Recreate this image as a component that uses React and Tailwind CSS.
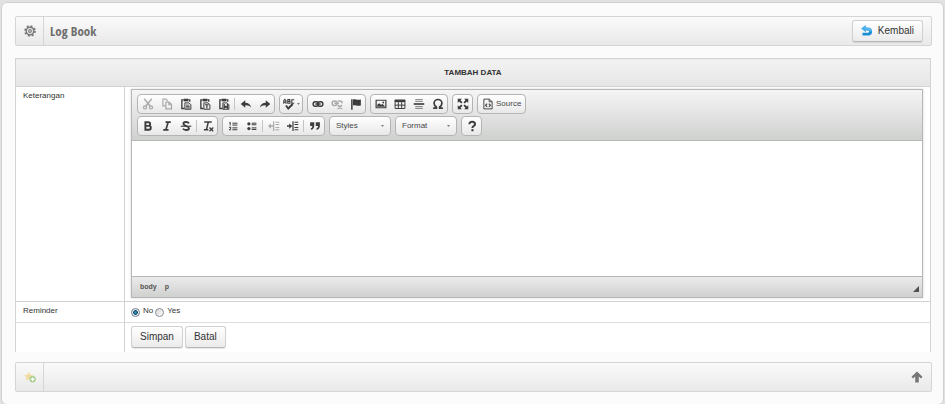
import { useState } from "react";

const Group = ({ children }) => (
    <div className="flex h-5 items-center rounded-sm border border-[#b4b4b4] bg-linear-to-b from-white to-[#e8e8e8]">
        {children}
    </div>
);

const Tool = ({ label, disabled, wide, children }) => (
    <button
        type="button"
        aria-label={label}
        disabled={disabled}
        className={`flex h-[18px] items-center justify-center text-[#3c3c3c] disabled:opacity-40 ${wide ? "w-[22px]" : "w-[19px]"}`}
    >
        {children}
    </button>
);

const Separator = () => <span className="mx-px h-3 w-px bg-[#c4c4c4]" />;

const Icon = ({ children, className = "size-3" }) => (
    <svg
        viewBox="0 0 16 16"
        className={className}
        fill="none"
        stroke="currentColor"
        strokeWidth="1.6"
        aria-hidden="true"
    >
        {children}
    </svg>
);

const Clipboard = ({ children }) => (
    <Icon>
        <path d="M5 2.5H2.5V14H6M11 2.5H13V5" strokeWidth="1.8" />
        <path d="M5 1h6v3.5H5z" fill="currentColor" stroke="none" />
        <path d="M6.5 6.5h5.5l2.5 2.5v6h-8z" strokeWidth="1.3" />
        {children}
    </Icon>
);

const Combo = ({ label }) => (
    <div className="relative h-5 rounded-sm border border-[#b4b4b4] bg-linear-to-b from-white to-[#e8e8e8]">
        <select
            aria-label={label}
            className="block h-[18px] w-[60px] appearance-none bg-transparent pl-1.5 text-[8px] text-[#474747] outline-none"
        >
            <option>{label}</option>
        </select>
        <svg viewBox="0 0 4 2" className="pointer-events-none absolute top-2 right-1.5 h-0.5 w-[3px]" aria-hidden="true">
            <path d="M0 0h4L2 2z" fill="#555" />
        </svg>
    </div>
);

const Toolbar = () => (
    <div className="space-y-0.5 border-b border-[#b6b6b6] bg-linear-to-b from-[#f5f5f5] to-[#cfd1cf] px-[5px] py-1">
        <div className="flex gap-1">
            <Group>
                <Tool label="Cut" disabled>
                    <Icon>
                        <path d="M3 1l8 10M13 1L5 11" strokeWidth="2" />
                        <circle cx="4" cy="12.5" r="2" />
                        <circle cx="12" cy="12.5" r="2" />
                    </Icon>
                </Tool>
                <Tool label="Copy" disabled>
                    <Icon>
                        <path d="M6 10.5H2.5V1.5H6.5L9 4" />
                        <path d="M6.5 5.5H11L14 8.5V14.5H6.5zM10.5 5.5V9H14" />
                    </Icon>
                </Tool>
                <Tool label="Paste">
                    <Clipboard>
                        <path d="M8 9.5h4.5M8 11.5h5M8 13.3h5" strokeWidth="1.2" />
                    </Clipboard>
                </Tool>
                <Tool label="Paste as plain text">
                    <Clipboard>
                        <path d="M8 9h5M10.5 9v5" />
                    </Clipboard>
                </Tool>
                <Tool label="Paste from Word">
                    <Clipboard>
                        <path d="M8.3 8v5.5l2.2-2.5 2.2 2.5V8" />
                    </Clipboard>
                </Tool>
                <Separator />
                <Tool label="Undo">
                    <Icon>
                        <path d="M1 8l6-5v3.2c4 0 7 2 8 6.8-2-2.5-4.5-3.3-8-3.2V13z" fill="currentColor" stroke="none" />
                    </Icon>
                </Tool>
                <Tool label="Redo">
                    <Icon>
                        <path d="M15 8L9 3v3.2c-4 0-7 2-8 6.8 2-2.5 4.5-3.3 8-3.2V13z" fill="currentColor" stroke="none" />
                    </Icon>
                </Tool>
            </Group>
            <Group>
                <Tool label="Spell check" wide>
                    <Icon>
                        <path d="M1 7.5V3.5L2.500 1.800 4 3.500V7.500M1 5.500h3M6.300 1.500v5.500h3V4.500h-3M6.300 2H9v2.500M15 2.300h-3.300V7H15" strokeWidth="1.4" />
                        <path d="M4 10l3 4 6-6" strokeWidth="2.6" />
                    </Icon>
                    <svg viewBox="0 0 4 2" className="ml-0.5 h-0.5 w-[3px]" aria-hidden="true">
                        <path d="M0 0h4L2 2z" fill="#555" />
                    </svg>
                </Tool>
            </Group>
            <Group>
                <Tool label="Link">
                    <Icon>
                        <rect x="1.5" y="5" width="7" height="6" rx="3" strokeWidth="2" />
                        <rect x="7.5" y="5" width="7" height="6" rx="3" strokeWidth="2" />
                        <path d="M4.5 8h7" strokeWidth="2" />
                    </Icon>
                </Tool>
                <Tool label="Unlink" disabled>
                    <Icon>
                        <rect x="1.5" y="4" width="6.5" height="6" rx="3" strokeWidth="2" />
                        <path d="M4.5 7h6M9 4h3a3 3 0 013 3M9 9.5l5.500 5M14.500 9.500l-5.500 5" strokeWidth="2" />
                    </Icon>
                </Tool>
                <Tool label="Anchor">
                    <Icon>
                        <path d="M2.5 1.5v14" strokeWidth="2" />
                        <path d="M4 2c3-1.500 4 1.500 10.500 0v8c-6 1.500-7.500-1.500-10.500 0z" fill="currentColor" stroke="none" />
                    </Icon>
                </Tool>
            </Group>
            <Group>
                <Tool label="Image">
                    <Icon>
                        <path d="M1.5 3h13v10h-13z" />
                        <path d="M3 11.5V9l2.500-2 2.500 2 2-1 3 2.500v1z" fill="currentColor" stroke="none" />
                        <circle cx="11" cy="6" r="1.2" fill="currentColor" stroke="none" />
                    </Icon>
                </Tool>
                <Tool label="Table">
                    <Icon>
                        <path d="M1 2h14v3.5H1z" fill="currentColor" stroke="none" />
                        <path d="M1.5 3v11h13V3M1 9.500h14M5.800 5v9M10.200 5v9" strokeWidth="1.3" />
                    </Icon>
                </Tool>
                <Tool label="Horizontal line">
                    <Icon>
                        <path d="M3 2h10M3 4.5h10M3 11.5h10M3 14h10" opacity="0.55" />
                        <path d="M1 8h14" strokeWidth="2.2" />
                    </Icon>
                </Tool>
                <Tool label="Special character">
                    <Icon>
                        <path d="M1.5 13.5h4.300v-1.500C3.500 10.500 2.800 9 2.800 7a5.200 5 0 0110.400 0c0 2-.7 3.500-3 5v1.500h4.300" strokeWidth="2.3" />
                    </Icon>
                </Tool>
            </Group>
            <Group>
                <Tool label="Maximize">
                    <Icon>
                        <path d="M1 1h5.5L1 6.500zM15 1v5.500L9.500 1zM1 15V9.500L6.500 15zM15 15H9.500L15 9.500z" fill="currentColor" stroke="none" />
                        <path d="M2 2l4.500 4.500M14 2L9.500 6.500M2 14l4.500-4.500M14 14L9.500 9.500" strokeWidth="2.4" />
                    </Icon>
                </Tool>
            </Group>
            <Group>
                <button type="button" className="flex h-[18px] items-center gap-0.5 px-1 text-[8px] text-[#474747]">
                    <Icon>
                        <path d="M2.5 1.5H10L13.5 5v9.500h-11zM9.500 1.500V5h4" strokeWidth="1.3" />
                        <path d="M6.8 7.5L4.800 9.700l2 2.200M9.200 7.500l2 2.200-2 2.200" />
                    </Icon>
                    Source
                </button>
            </Group>
        </div>
        <div className="flex gap-1">
            <Group>
                <Tool label="Bold">
                    <Icon>
                        <path d="M4.5 3h4a2.400 2.400 0 010 4.800h-4zM4.500 7.800h4.700a2.600 2.600 0 010 5.200H4.500z" strokeWidth="2.5" />
                    </Icon>
                </Tool>
                <Tool label="Italic">
                    <Icon>
                        <path d="M6 2.8h7M3 13.200h7M9.500 3l-3 10" strokeWidth="2.2" />
                    </Icon>
                </Tool>
                <Tool label="Strikethrough">
                    <Icon>
                        <path d="M12 4.5C10.500 2 4.500 2 4.500 5s7.500 3 7.500 6-6.500 3-8 .5" strokeWidth="2.4" />
                        <path d="M1 8.3h14" strokeWidth="1.5" />
                    </Icon>
                </Tool>
                <Separator />
                <Tool label="Remove format">
                    <Icon>
                        <path d="M3 2.5h10M8.500 2.500l-2.500 10M2.500 13h6" strokeWidth="2" />
                        <path d="M10 10l5 5M15 10l-5 5" strokeWidth="1.7" />
                    </Icon>
                </Tool>
            </Group>
            <Group>
                <Tool label="Numbered list">
                    <Icon className="size-2.5">
                        <path d="M2 3l1.500-1v5M1.500 10h3v1.500L2 14h3" strokeWidth="1.6" />
                        <path d="M7 3.5h8M7 6.500h8M7 11h8M7 14h8" strokeWidth="1.6" />
                    </Icon>
                </Tool>
                <Tool label="Bulleted list">
                    <Icon className="size-2.5">
                        <circle cx="3" cy="4.5" r="2.6" fill="currentColor" stroke="none" />
                        <circle cx="3" cy="12" r="2.6" fill="currentColor" stroke="none" />
                        <path d="M7.5 3.500h7.500M7.500 6h7.500M7.500 11h7.500M7.500 13.500h7.500" strokeWidth="1.6" />
                    </Icon>
                </Tool>
                <Separator />
                <Tool label="Decrease indent" disabled>
                    <Icon>
                        <path d="M7.5 1.5v13M10 3h5M10 6h5M10 10h5M10 13h5" />
                        <path d="M0 8l4-3.500v7z" fill="currentColor" stroke="none" />
                        <path d="M3 8h4" strokeWidth="2" />
                    </Icon>
                </Tool>
                <Tool label="Increase indent">
                    <Icon>
                        <path d="M8 1.5v13M10 3h5M10 6h5M10 10h5M10 13h5" />
                        <path d="M7 8L3 4.500v7z" fill="currentColor" stroke="none" />
                        <path d="M0 8h4" strokeWidth="2" />
                    </Icon>
                </Tool>
                <Separator />
                <Tool label="Block quote">
                    <Icon>
                        <path d="M1.5 3h5.500v4.500c0 3-1.500 5-4.500 5.500v-2c1.300-.5 2-1.500 2-3h-3zM9 3h5.500v4.500c0 3-1.500 5-4.500 5.500v-2c1.300-.5 2-1.500 2-3H9z" fill="currentColor" stroke="none" />
                    </Icon>
                </Tool>
            </Group>
            <Combo label="Styles" />
            <Combo label="Format" />
            <Group>
                <Tool label="About">
                    <Icon>
                        <path d="M4.5 5.500C4.500 1 12 1.500 12 5.500c0 2.500-3.500 2.500-3.500 5" strokeWidth="2.7" />
                        <path d="M7.2 12.200h2.800v2.800H7.200z" fill="currentColor" stroke="none" />
                    </Icon>
                </Tool>
            </Group>
        </div>
    </div>
);

const Editor = () => (
    <div className="border border-[#b6b6b6] shadow-[0_0_3px_rgba(0,0,0,0.15)]">
        <Toolbar />
        <textarea
            aria-label="Keterangan"
            className="block h-[135px] w-full resize-none bg-white p-2 text-[8px] outline-none"
        />
        <div className="flex h-[21px] items-center justify-between border-t border-[#b6b6b6] bg-linear-to-b from-[#ebebeb] to-[#cfd1cf] pr-[3px] pl-2 text-[7px] font-bold text-[#555]">
            <div className="flex gap-2">
                <a href="#body">body</a>
                <a href="#p">p</a>
            </div>
            <svg viewBox="0 0 6 6" className="mt-1 size-1.5" aria-hidden="true">
                <path d="M6 0v6H0z" fill="#4f4f4f" />
            </svg>
        </div>
    </div>
);

const Button = ({ children }) => (
    <button
        type="button"
        className="flex h-[22px] items-center gap-1 rounded-[3px] border border-[#d0d0d0] border-b-[#b8b8b8] bg-linear-to-b from-white to-[#ebebeb] px-2 text-[10px] text-[#333] shadow-[0_1px_1px_rgba(0,0,0,0.1)]"
    >
        {children}
    </button>
);

const Radio = ({ label, checked, onChange }) => (
    <label className="flex items-center gap-[3px]">
        <input
            type="radio"
            name="reminder"
            checked={checked}
            onChange={onChange}
            className="mt-0.5 size-[9px] appearance-none rounded-full border border-[#8c8f94] bg-linear-to-br from-[#d4d4d4] to-white checked:border-[#6b7f8e] checked:bg-radial checked:from-[#2aa5dc] checked:from-10% checked:via-[#123a54] checked:via-40% checked:to-[#eef3f6] checked:to-52%"
        />
        {label}
    </label>
);

const App = () => {
    const [reminder, setReminder] = useState("No");

    return (
        <div className="min-h-screen bg-[#e1e1e1] pt-0.5 pr-px pl-px font-['Liberation_Sans',Arial,sans-serif] text-[8px] leading-3 text-[#333]">
            <main className="rounded-md border border-[#d0d0d0] bg-[#fbfbfb] pt-[13px] pr-3 pb-3 pl-[13px]">
                <header className="-mr-px flex h-[30px] items-center rounded-xs border border-[#d5d5d5] bg-linear-to-b from-[#fafafa] to-[#e9e9e9] pr-2">
                    <span className="flex h-full w-7 items-center justify-center border-r border-[#d5d5d5]">
                        <svg viewBox="0 0 16 16" className="size-3" fill="none" stroke="#777" aria-hidden="true">
                            <circle cx="8" cy="8" r="5" strokeWidth="2" />
                            <circle cx="8" cy="8" r="1.8" strokeWidth="1.5" />
                            <circle cx="8" cy="8" r="6.7" strokeWidth="2.2" strokeDasharray="2.6 2.66" />
                        </svg>
                    </span>
                    <h1 className="ml-1.5 flex-1 font-['Liberation_Sans_Narrow','Open_Sans_Condensed','Roboto_Condensed','Liberation_Sans',sans-serif] text-[13px] font-bold text-[#6e6e6e]">
                        Log Book
                    </h1>
                    <Button>
                        <svg viewBox="0 0 16 16" className="mr-px size-3" aria-hidden="true">
                            <path d="M2 12.200h7.500a3.200 3.200 0 000-6.800H5" fill="none" stroke="#1b8fd6" strokeWidth="3.8" />
                            <path d="M5 4.800h4.500a3.800 3.800 0 013.800 3.500" fill="none" stroke="#5bb9ee" strokeWidth="3" />
                            <path d="M0 4.800L6.500 0v9.600z" fill="#4aaee8" />
                        </svg>
                        Kembali
                    </Button>
                </header>

                <table className="mt-3 w-full border-collapse border-x border-t border-[#d3d3d3] bg-white">
                    <thead>
                        <tr className="h-7">
                            <th
                                colSpan={2}
                                className="border-b border-[#d3d3d3] bg-linear-to-b from-[#f3f3f3] to-[#e5e5e5] text-center font-bold text-[#333]"
                            >
                                TAMBAH DATA
                            </th>
                        </tr>
                    </thead>
                    <tbody>
                        <tr className="border-b border-[#d3d3d3]">
                            <td className="w-[109px] border-r border-[#d3d3d3] px-[7px] pt-[3px] align-top">Keterangan</td>
                            <td className="pt-0.5 pr-[7px] pb-[3px] pl-1.5">
                                <Editor />
                            </td>
                        </tr>
                        <tr className="h-[21px] border-b border-[#dedede]">
                            <td className="border-r border-[#d3d3d3] px-[7px] pt-[3px] align-top">Reminder</td>
                            <td className="pt-[3px] pr-[7px] pl-1.5 align-top">
                                <div className="flex gap-0.5">
                                    {["No", "Yes"].map((value) => (
                                        <Radio
                                            key={value}
                                            label={value}
                                            checked={reminder === value}
                                            onChange={() => setReminder(value)}
                                        />
                                    ))}
                                </div>
                            </td>
                        </tr>
                        <tr className="h-7">
                            <td className="border-r border-[#d3d3d3]" />
                            <td className="pt-[3px] pr-[7px] pb-1 pl-1.5 align-top">
                                <div className="flex gap-0.5">
                                    <Button>Simpan</Button>
                                    <Button>Batal</Button>
                                </div>
                            </td>
                        </tr>
                    </tbody>
                </table>

                <footer className="mt-2.5 -mr-px flex h-[30px] items-center rounded-xs border border-[#d5d5d5] bg-linear-to-b from-[#fafafa] to-[#e9e9e9] pr-2">
                    <button
                        type="button"
                        aria-label="Add favorite"
                        className="flex h-full w-7 items-center justify-center border-r border-[#d5d5d5]"
                    >
                        <svg viewBox="0 0 16 16" className="size-3 opacity-75" aria-hidden="true">
                            <path d="M6.5 1l1.800 4 4.400.5-3.200 3 .8 4.500-3.800-2.200L2.500 13l.8-4.500-3.200-3 4.400-.5z" fill="#f3d488" />
                            <circle cx="11.5" cy="11" r="4.2" fill="#8cc56d" />
                            <path d="M11.5 8.500v5M9 11h5" stroke="#fff" strokeWidth="1.8" />
                        </svg>
                    </button>
                    <a href="#top" aria-label="Back to top" className="ml-auto">
                        <svg viewBox="0 0 12 12" className="size-3" aria-hidden="true">
                            <path d="M6 .5l5.500 5.300-1.600 1.700-2.100-2V11.500H4.200V5.500l-2.100 2L.5 5.800z" fill="#777" />
                        </svg>
                    </a>
                </footer>
            </main>
        </div>
    );
};

export default App;
